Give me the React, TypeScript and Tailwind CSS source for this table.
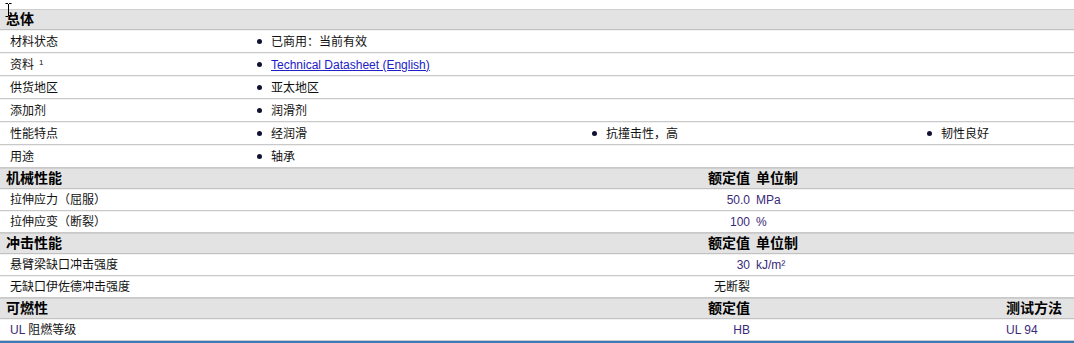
const font = { fontFamily: '"Liberation Sans", "Noto Sans CJK SC", sans-serif' };

const Bullet = ({ children }: { children: React.ReactNode }) => (
    <div className="flex items-center pl-[7px]">
        <span className="w-[5px] h-[5px] rounded-full bg-[#111133] mr-[9px]" />
        {children}
    </div>
);

const SectionHeader = ({ title, cols }: { title: string; cols?: string[] }) => (
    <div className="flex items-center h-[21px] bg-[#e3e3e3] border-t border-[#cfcfcf] border-b border-b-[#c2c2c2] text-[14px] font-bold text-black">
        <div className="w-[600px] pl-[6px]">{title}</div>
        {cols && (
            <>
                <div className="w-[150px] text-right">{cols[0]}</div>
                <div className="w-[256px] pl-[6px]">{cols[1]}</div>
                <div className="flex-1">{cols[2]}</div>
            </>
        )}
    </div>
);

const GeneralRow = ({ label, items, sup }: { label: string; items: React.ReactNode[]; sup?: string }) => (
    <div className="grid grid-cols-[250px_335px_335px_1fr] items-center h-[23px] border-t border-[#f2f2f2] border-b border-b-[#c9c9c9] text-[12px] text-[#111]">
        <div className="pl-[10px]">
            {label}
            {sup && <sup className="text-[8px] ml-[5px] relative -top-[4px]">{sup}</sup>}
        </div>
        {items.map((it, i) => (
            <Bullet key={i}>{it}</Bullet>
        ))}
    </div>
);

type PropRow = { label: React.ReactNode; value: string; unit?: string; method?: string; plain?: boolean };

const PropertyRow = ({ row }: { row: PropRow }) => (
    <div className="flex items-center h-[22px] border-t border-[#f2f2f2] border-b border-b-[#c9c9c9] text-[12px] text-[#111]">
        <div className="w-[600px] pl-[10px]">{row.label}</div>
        <div className={`w-[150px] text-right ${row.plain ? 'text-[#111]' : 'text-[#3a2a7a]'}`}>{row.value}</div>
        <div className="w-[256px] pl-[6px] text-[#3a2a7a]">{row.unit}</div>
        <div className="flex-1 text-[#3a2a7a]">{row.method}</div>
    </div>
);

const App = () => {
    return (
        <div className="relative w-[1074px] h-[343px] bg-white pt-[9px] overflow-hidden" style={font}>
            <svg className="absolute left-[5px] top-[3px]" width="7" height="14" viewBox="0 0 7 14">
                <path d="M0.5 0.5h2.5M4 0.5h2.5M3.5 1v12M0.5 13.5h2.5M4 13.5h2.5" stroke="#000" strokeWidth="1" fill="none" />
            </svg>
            <SectionHeader title="总体" />
            <GeneralRow label="材料状态" items={['已商用：当前有效']} />
            <GeneralRow
                label="资料"
                sup="1"
                items={[
                    <a key="l" href="#" className="text-[#2020c8] underline">
                        Technical Datasheet (English)
                    </a>,
                ]}
            />
            <GeneralRow label="供货地区" items={['亚太地区']} />
            <GeneralRow label="添加剂" items={['润滑剂']} />
            <GeneralRow label="性能特点" items={['经润滑', '抗撞击性，高', '韧性良好']} />
            <GeneralRow label="用途" items={['轴承']} />

            <SectionHeader title="机械性能" cols={['额定值', '单位制', '']} />
            <PropertyRow row={{ label: '拉伸应力（屈服）', value: '50.0', unit: 'MPa' }} />
            <PropertyRow row={{ label: '拉伸应变（断裂）', value: '100', unit: '%' }} />

            <SectionHeader title="冲击性能" cols={['额定值', '单位制', '']} />
            <PropertyRow row={{ label: '悬臂梁缺口冲击强度', value: '30', unit: 'kJ/m²' }} />
            <PropertyRow row={{ label: '无缺口伊佐德冲击强度', value: '无断裂', plain: true }} />

            <SectionHeader title="可燃性" cols={['额定值', '', '测试方法']} />
            <PropertyRow
                row={{
                    label: (
                        <span>
                            <span className="text-[#3a2a7a]">UL</span> 阻燃等级
                        </span>
                    ),
                    value: 'HB',
                    method: 'UL 94',
                }}
            />
            <div className="h-[2px] bg-[#3d7ab8]" />
        </div>
    );
};

export default App;
